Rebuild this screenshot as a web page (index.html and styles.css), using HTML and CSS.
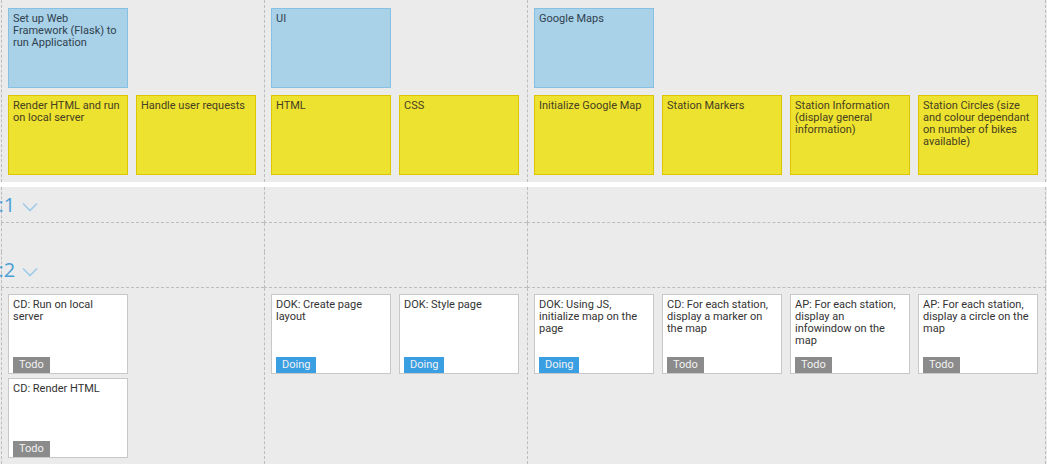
FILE: index.html
```html
<!DOCTYPE html>
<html>
<head>
<meta charset="utf-8">
<link rel="stylesheet" href="styles.css">
</head>
<body>
<div class="board">
  <div class="grid top">
    <div class="col">
      <div class="cards"><div class="card epic">Set up Web Framework (Flask) to run Application</div></div>
      <div class="cards">
        <div class="card feat">Render HTML and run on local server</div>
        <div class="card feat">Handle user requests</div>
      </div>
    </div>
    <div class="col">
      <div class="cards"><div class="card epic">UI</div></div>
      <div class="cards">
        <div class="card feat">HTML</div>
        <div class="card feat">CSS</div>
      </div>
    </div>
    <div class="col last">
      <div class="cards"><div class="card epic">Google Maps</div></div>
      <div class="cards">
        <div class="card feat">Initialize Google Map</div>
        <div class="card feat">Station Markers</div>
        <div class="card feat">Station Information (display general information)</div>
        <div class="card feat">Station Circles (size and colour dependant on number of bikes available)</div>
      </div>
    </div>
  </div>
  <div class="sep"></div>

  <div class="grid lane-head">
    <div class="hcell"><span class="lane-label"><span class="cut">:</span>1<svg class="chev" width="16" height="10" viewBox="0 0 16 10"><polyline points="1,1.5 8,8.5 15,1.5" fill="none" stroke="#9ecbe9" stroke-width="1.6"/></svg></span></div>
    <div class="hcell"></div>
    <div class="hcell last"></div>
  </div>
  <div class="grid lane-body empty">
    <div class="bcell"></div>
    <div class="bcell"></div>
    <div class="bcell last"></div>
  </div>

  <div class="grid lane-head">
    <div class="hcell"><span class="lane-label"><span class="cut">:</span>2<svg class="chev" width="16" height="10" viewBox="0 0 16 10"><polyline points="1,1.5 8,8.5 15,1.5" fill="none" stroke="#9ecbe9" stroke-width="1.6"/></svg></span></div>
    <div class="hcell"></div>
    <div class="hcell last"></div>
  </div>
  <div class="grid lane-body">
    <div class="bcell">
      <div class="sub">
        <div class="task"><div class="ttl">CD: Run on local server</div><span class="badge todo">Todo</span></div>
        <div class="task"><div class="ttl">CD: Render HTML</div><span class="badge todo">Todo</span></div>
      </div>
      <div class="sub"></div>
    </div>
    <div class="bcell">
      <div class="sub">
        <div class="task"><div class="ttl">DOK: Create page layout</div><span class="badge doing">Doing</span></div>
      </div>
      <div class="sub">
        <div class="task"><div class="ttl">DOK: Style page</div><span class="badge doing">Doing</span></div>
      </div>
    </div>
    <div class="bcell last">
      <div class="sub">
        <div class="task"><div class="ttl">DOK: Using JS, initialize map on the page</div><span class="badge doing">Doing</span></div>
      </div>
      <div class="sub">
        <div class="task"><div class="ttl">CD: For each station, display a marker on the map</div><span class="badge todo">Todo</span></div>
      </div>
      <div class="sub">
        <div class="task"><div class="ttl">AP: For each station, display an infowindow on the map</div><span class="badge todo">Todo</span></div>
      </div>
      <div class="sub">
        <div class="task"><div class="ttl">AP: For each station, display a circle on the map</div><span class="badge todo">Todo</span></div>
      </div>
    </div>
  </div>
</div>
</body>
</html>
```

FILE: styles.css
```css
* { box-sizing: border-box; }
html, body { margin: 0; padding: 0; }
body {
  background: #ebebeb;
  font-family: "Roboto", "Open Sans", sans-serif;
  font-size: 11px;
  color: #333;
  width: 1047px;
  height: 464px;
  overflow: hidden;
}
.board { padding-left: 1px; }
.grid {
  display: grid;
  grid-template-columns: 263px 263px 519px;
}
.col, .hcell, .bcell {
  border-left: 1px dashed #bdbdbd;
}
.col.last, .hcell.last, .bcell.last { border-right: 1px dashed #bdbdbd; }

.col {
  padding: 8px 0 7px 6px;
  display: flex;
  flex-direction: column;
  gap: 7px;
}
.cards { display: flex; gap: 8px; }
.card {
  width: 120px;
  height: 80px;
  padding: 4px 6px 4px 4px;
  line-height: 12px;
}
.epic { background: #a9d1e7; border: 1px solid #86c1e3; color: #2f4250; }
.feat { background: #eee231; border: 1px solid #dcc600; color: #454020; }

.sep { height: 5px; background: #fff; margin-left: -1px; }

.lane-head { height: 36px; }
.hcell { border-bottom: 1px dashed #bdbdbd; display: flex; align-items: center; }
.lane-label {
  display: flex;
  align-items: center;
  font-size: 20px;
  font-family: "Open Sans", sans-serif;
  color: #4a9fd6;
  line-height: 20px;
  margin-left: -3.5px;
}
.cut { margin-right: 0; }
.chev { margin-left: 7px; margin-top: 4px; }

.lane-body.empty { height: 29px; }
.lane-body.empty .bcell { padding: 0; }
.bcell {
  padding: 6px 0 6px 6px;
  display: flex;
  align-items: flex-start;
  gap: 8px;
}
.sub {
  width: 120px;
  display: flex;
  flex-direction: column;
  gap: 4px;
}
.task {
  width: 120px;
  height: 80px;
  background: #fff;
  border: 1px solid #c8c8c8;
  display: flex;
  flex-direction: column;
  padding: 4px 0 0 0;
}
.ttl { padding: 0 6px 0 4px; line-height: 12px; color: #333; }
.badge {
  margin-top: auto;
  align-self: flex-start;
  margin-left: 4px;
  height: 16px;
  line-height: 16px;
  padding: 0 6px;
  color: #f2f2f2;
  font-size: 11px;
}
.todo { background: #8b8b8b; }
.doing { background: #3a9ee3; }
```
